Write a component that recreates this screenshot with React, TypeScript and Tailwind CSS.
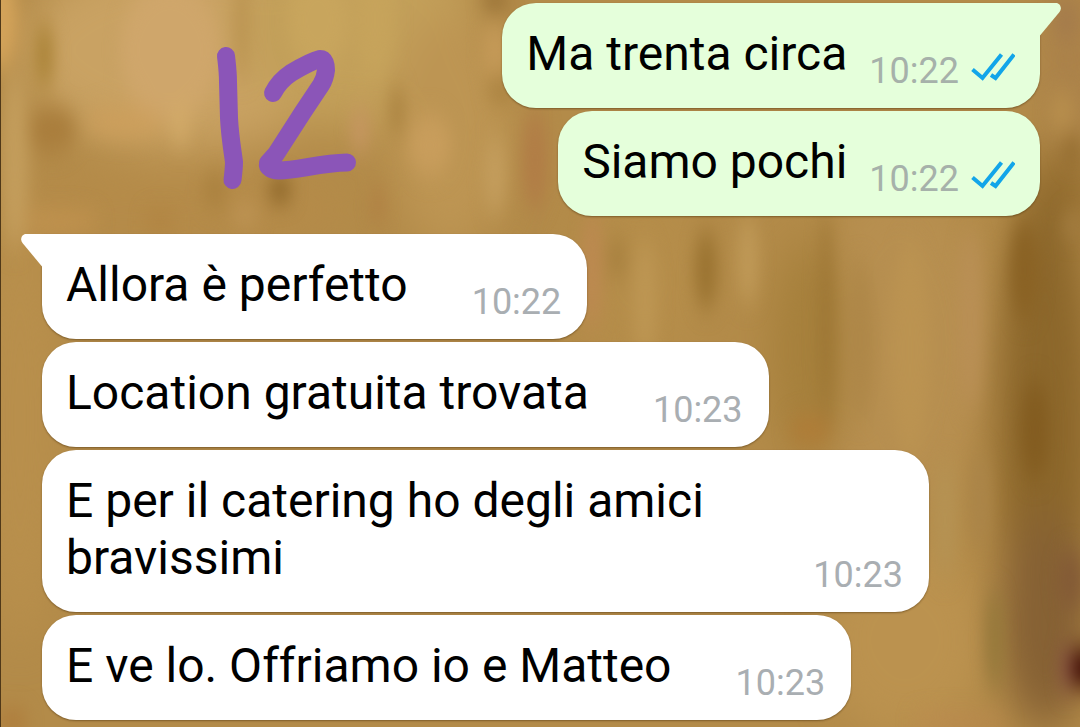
import React from "react";
import clsx from "clsx";

interface Message {
    id: number;
    text: string;
    time: string;
    sent: boolean;
    // First message of a group carries the tail
    first?: boolean;
}

const messages: Message[] = [
    { id: 1, text: "Ma trenta circa", time: "10:22", sent: true, first: true },
    { id: 2, text: "Siamo pochi", time: "10:22", sent: true },
    { id: 3, text: "Allora è perfetto", time: "10:22", sent: false, first: true },
    { id: 4, text: "Location gratuita trovata", time: "10:23", sent: false },
    { id: 5, text: "E per il catering ho degli amici bravissimi", time: "10:23", sent: false },
    { id: 6, text: "E ve lo. Offriamo io e Matteo", time: "10:23", sent: false },
];

// Soft wood grain spots: cx, cy, rx, ry, fill
type Spot = [number, number, number, number, string];

// Wide areas of tone
const tones: Spot[] = [
    [190, 50, 170, 100, "#c9a263"],
    [360, 30, 120, 100, "#c3a05a"],
    [150, 210, 200, 40, "#b58b49"],
    [450, 130, 60, 120, "#bd9553"],
    [1070, 60, 30, 90, "#ab824a"],
    [1060, 190, 40, 40, "#956e30"],
    [20, 420, 40, 220, "#b88f4c"],
    [640, 280, 70, 90, "#b58d4a"],
    [900, 350, 90, 170, "#b78f50"],
    [810, 350, 40, 110, "#a6803c"],
    [1045, 430, 50, 240, "#8c672b"],
    [905, 640, 80, 100, "#bb924f"],
    [1045, 620, 45, 110, "#866134"],
];

// Narrow streaks and knots
const streaks: Spot[] = [
    [0, 20, 18, 50, "#d3a35a"],
    [15, 160, 14, 90, "#c39d5c"],
    [170, 50, 50, 70, "#cfa66b"],
    [318, 20, 30, 50, "#c8a55d"],
    [375, 20, 20, 60, "#c6a35b"],
    [242, 20, 7, 60, "#ba9350"],
    [44, 55, 9, 34, "#a98236"],
    [52, 130, 24, 22, "#a97d3c"],
    [125, 122, 40, 14, "#cd9f5c"],
    [180, 122, 9, 24, "#d2aa68"],
    [60, 222, 40, 8, "#c59551"],
    [160, 222, 16, 8, "#b08240"],
    [215, 190, 12, 16, "#a9803e"],
    [280, 190, 12, 10, "#805a1e"],
    [245, 215, 14, 8, "#c2985a"],
    [360, 130, 8, 24, "#c79663"],
    [397, 110, 5, 26, "#a27a38"],
    [378, 205, 6, 20, "#b07e42"],
    [430, 145, 22, 30, "#c89d5c"],
    [495, 50, 12, 28, "#c59a58"],
    [495, 0, 14, 6, "#7e5822"],
    [500, 90, 14, 6, "#9b7330"],
    [495, 175, 10, 40, "#c49e5e"],
    [535, 160, 12, 50, "#b17c46"],
    [592, 270, 8, 60, "#be8852"],
    [617, 258, 9, 20, "#a67f3e"],
    [645, 300, 12, 60, "#bd9653"],
    [706, 270, 11, 40, "#997230"],
    [748, 260, 10, 45, "#c09a58"],
    [826, 320, 6, 110, "#9b7432"],
    [860, 340, 12, 80, "#ae8748"],
    [910, 350, 20, 110, "#bb9351"],
    [970, 320, 12, 90, "#b98f55"],
    [810, 430, 22, 12, "#b07b36"],
    [1025, 270, 14, 50, "#8a6224"],
    [1035, 430, 14, 50, "#835c20"],
    [1072, 225, 10, 10, "#a88246"],
    [1066, 20, 12, 20, "#a47b4c"],
    [1062, 112, 12, 20, "#b88f4d"],
    [1072, 150, 8, 12, "#8e672a"],
    [945, 520, 12, 60, "#b59253"],
    [980, 500, 10, 50, "#ab8549"],
    [995, 640, 8, 50, "#94793a"],
    [1070, 580, 12, 30, "#835a36"],
    [960, 722, 50, 6, "#bd8850"],
    [12, 722, 16, 10, "#ad7838"],
    [1066, 668, 5, 26, "#824a42"],
    [1084, 668, 12, 20, "#3a0600"],
];

const renderSpots = (spots: Spot[]) =>
    spots.map(([cx, cy, rx, ry, fill], i) => (
        <ellipse key={i} cx={cx} cy={cy} rx={rx} ry={ry} fill={fill} />
    ));

const Wallpaper: React.FC = () => (
    <svg
        className="absolute inset-0 h-full w-full"
        viewBox="0 0 1080 727"
        preserveAspectRatio="none"
        aria-hidden="true"
    >
        <defs>
            <filter
                id="tone"
                filterUnits="userSpaceOnUse"
                x="-100"
                y="-100"
                width="1280"
                height="927"
                colorInterpolationFilters="sRGB"
            >
                <feGaussianBlur stdDeviation="18 24" />
            </filter>
            <filter
                id="streak"
                filterUnits="userSpaceOnUse"
                x="-100"
                y="-100"
                width="1280"
                height="927"
                colorInterpolationFilters="sRGB"
            >
                <feGaussianBlur stdDeviation="8 12" />
            </filter>
        </defs>
        <rect width="1080" height="727" fill="#b38b49" />
        <g filter="url(#tone)">{renderSpots(tones)}</g>
        <g filter="url(#streak)">{renderSpots(streaks)}</g>
        <rect width="1" height="727" fill="#4f3818" />
    </svg>
);

// Number drawn by hand over the chat
const Scribble: React.FC = () => (
    <svg
        className="absolute left-[210px] top-10"
        width="160"
        height="160"
        viewBox="210 40 160 160"
        fill="none"
        stroke="#8b55b8"
        strokeWidth="18"
        strokeLinecap="round"
        strokeLinejoin="round"
        role="img"
        aria-label="12"
    >
        <path d="M226 56 C227 65 228 72 228 82 L229 118 C230 137 232 147 234 162 Q234 168 232.500 180" />
        <path d="M273 93 C278 83 285 77 291 73 C301 67 312 61 320 59 C325 59 326 65 326 70 Q325 79 321 85 L303 112 L276 154 L268 163 C267 168 272 170 279 170.500 C298 170 321 163 347 162.500" />
    </svg>
);

const Tail: React.FC<{ sent: boolean }> = ({ sent }) => (
    <svg
        className={clsx(
            "absolute top-0",
            sent ? "left-full text-[#e5ffdb]" : "right-full -scale-x-100 text-white"
        )}
        width="21"
        height="34"
        viewBox="0 0 21 34"
        aria-hidden="true"
    >
        <path d="M-1 0 H16 C20 0 22.500 5 19.500 9 L0 32.500 H-1 Z" fill="currentColor" />
    </svg>
);

const ReadTicks: React.FC = () => (
    <svg
        className="mb-[26px] ml-3 shrink-0"
        width="44"
        height="30"
        viewBox="0 0 44 30"
        fill="none"
        stroke="#12a5e9"
        strokeWidth="4"
        role="img"
        aria-label="Letto"
    >
        <path d="M1.500 17.500 L11.500 26 L30.500 2.500" />
        <path d="M20 23 L24.500 26 L43 2.500" />
    </svg>
);

const Bubble: React.FC<{ message: Message }> = ({ message }) => {
    const { text, time, sent, first } = message;

    return (
        <li
            className={clsx(
                "relative flex max-w-[887px] items-end rounded-[34px] pl-6 shadow-[0_1px_2px_rgba(60,35,0,0.45)]",
                sent ? "self-end bg-[#e5ffdb] pr-[25px]" : "self-start bg-white pr-[26px]",
                first && sent && "rounded-tr-none",
                first && !sent && "mt-[15px] rounded-tl-none"
            )}
        >
            {first && <Tail sent={sent} />}
            <p className="pb-[26px] pt-[22px] text-[48px] leading-[57px] text-black">{text}</p>
            <time
                className={clsx(
                    "shrink-0 pb-4 text-[36px] leading-[42px]",
                    sent ? "ml-[22px] text-[#a6b1aa]" : "ml-16 text-[#a9aeb2]"
                )}
            >
                {time}
            </time>
            {sent && <ReadTicks />}
        </li>
    );
};

export default function App() {
    return (
        <main className="relative min-h-screen overflow-hidden bg-[#b38b49] font-['Roboto',sans-serif]">
            <Wallpaper />
            <ul className="relative flex flex-col gap-[3px] pb-[7px] pl-[42px] pr-10 pt-[3px]">
                {messages.map((message) => (
                    <Bubble key={message.id} message={message} />
                ))}
            </ul>
            <Scribble />
        </main>
    );
}
